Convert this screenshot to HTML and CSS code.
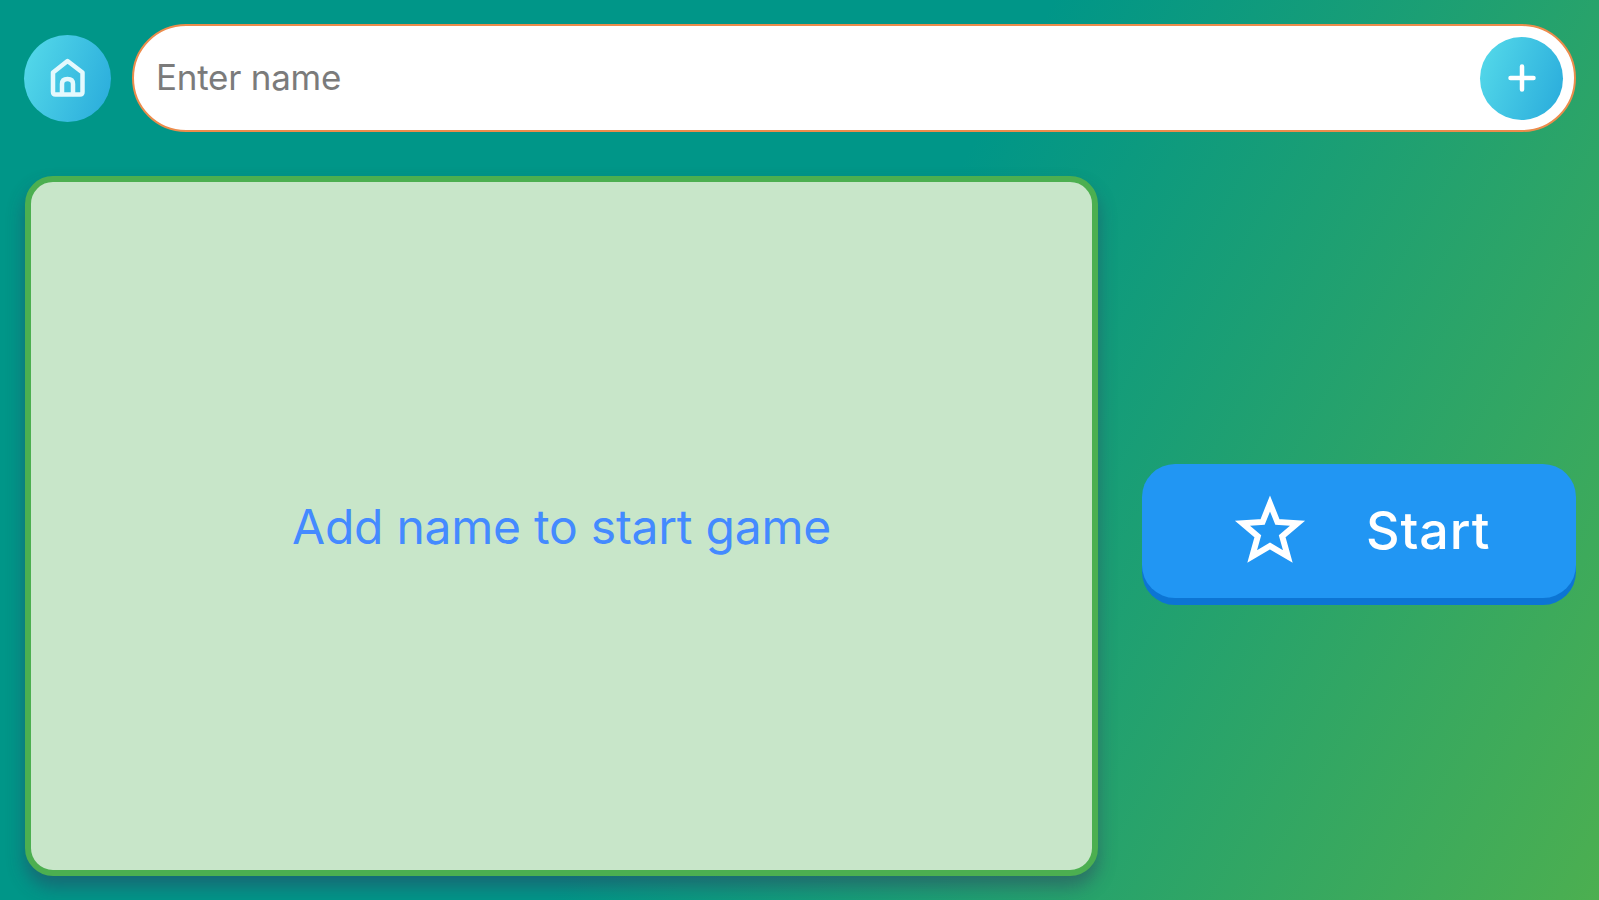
FILE: index.html
```html
<!DOCTYPE html>
<html lang="en">
<head>
    <meta charset="UTF-8">
    <meta name="viewport" content="width=device-width, initial-scale=1.0">
    <title>Start game</title>
    <link rel="stylesheet" href="styles.css">
</head>
<body>
    <div class="page">
        <div class="header">
            <button class="round-btn home" aria-label="Home">
                <svg width="36" height="40" viewBox="0 0 36 40">
                    <path d="M3 14.5 L17.5 3 L32.5 14.5 V34 Q32.5 36.5 30 36.5 H5.5 Q3 36.5 3 34 Z" />
                    <path d="M12 36 V26 Q12 21 17.5 21 Q23 21 23 26 V36" />
                </svg>
            </button>
            <div class="name-box">
                <input class="name-input" type="text" placeholder="Enter name">
                <button class="round-btn add" aria-label="Add">
                    <svg width="28" height="28" viewBox="0 0 28 28">
                        <path d="M14 2.5 V25.5 M2.5 14 H25.5" />
                    </svg>
                </button>
            </div>
        </div>
        <div class="content">
            <div class="panel"><span class="panel-text">Add name to start game</span></div>
            <button class="start">
                <svg class="star" width="72" height="72" viewBox="0 0 72 72">
                    <path d="M36 8.5 L43.4 27 L63.5 28.3 L48.2 41.3 L53.8 61.5 L36 51 L18.2 61.5 L23.8 41.3 L8.5 28.3 L28.6 27 Z" />
                </svg>
                <span class="start-text">Start</span>
            </button>
        </div>
    </div>
</body>
</html>
```
FILE: styles.css
```css
*{
    margin: 0;
    padding: 0;
    box-sizing: border-box;
}
body {
    font-family: Inter, "Liberation Sans", sans-serif;
    overflow: hidden;
}
button, input {
    border: none;
    outline: none;
    font-family: inherit;
}
.page {
    width: 100%;
    height: 100vh;
    padding: 24px 23px 24px 24px;
    display: flex;
    flex-direction: column;
    gap: 44px;
    background: linear-gradient(119.4deg, #009688 50%, #4caf50 100%);
}

.header {
    display: flex;
    align-items: center;
    gap: 21px;
    height: 108px;
}

.round-btn {
    display: flex;
    align-items: center;
    justify-content: center;
    flex-shrink: 0;
    border-radius: 50%;
    background: linear-gradient(110deg, #56dbea, #28aadb);
}
.round-btn svg {
    fill: none;
    stroke: #fff;
    stroke-width: 4.5;
    stroke-linecap: round;
    stroke-linejoin: round;
}
.home {
    width: 87px;
    height: 87px;
}
.home svg {
    stroke: #e4f9fd;
}
.add {
    width: 83px;
    height: 83px;
}

.name-box {
    flex: 1;
    height: 108px;
    display: flex;
    align-items: center;
    padding: 0 11px 0 22px;
    background: #fff;
    border: 2px solid #ec8c4c;
    border-radius: 54px;
}
.name-input {
    flex: 1;
    height: 100%;
    padding-bottom: 3px;
    background: none;
    font-size: 35px;
    letter-spacing: -0.25px;
}
.name-input::placeholder {
    color: #7b7b7b;
}

.content {
    flex: 1;
    display: flex;
    align-items: center;
    gap: 44px;
}
.panel {
    flex: 1;
    height: 100%;
    margin-left: 1px;
    display: flex;
    align-items: center;
    justify-content: center;
    background: #c8e6c9;
    border: 6px solid #4caf50;
    border-radius: 28px;
    box-shadow: 0 11px 18px rgba(50, 50, 93, 0.45);
}
.panel-text {
    color: #448aff;
    font-size: 48px;
    letter-spacing: -0.25px;
}

.start {
    width: 434px;
    height: 134px;
    margin-top: 10px;
    display: flex;
    align-items: center;
    background: #2196f3;
    border-radius: 33px;
    box-shadow: 0 7px 0 #0c75d4;
    padding-left: 92px;
    gap: 60px;
}
.star {
    fill: none;
    stroke: #fff;
    stroke-width: 6;
}
.start-text {
    color: #fff;
    font-size: 52px;
    font-weight: 500;
    letter-spacing: 0.9px;
    padding-bottom: 2px;
}
```
